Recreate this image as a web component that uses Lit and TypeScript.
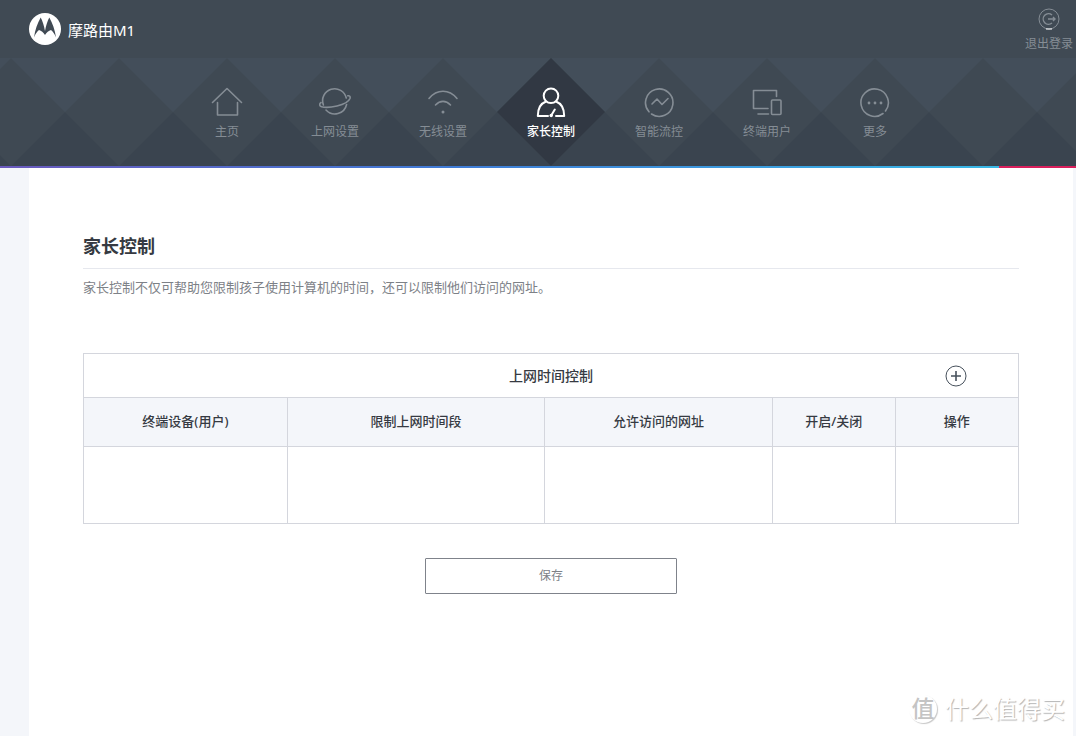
import { LitElement, html, css, svg, type SVGTemplateResult } from "lit";
import { customElement, property } from "lit/decorators.js";

const icons: Record<string, SVGTemplateResult> = {
  home: svg`<path d="M1.500 16.500 16 2.500l14.500 14M6.500 16.500V29h20V16.500" />`,
  planet: svg`<path d="M4.400 19A12 12 0 1 1 27.300 12M27.600 18.500A12 12 0 0 1 7 24" /><path d="M2 16.500C0 18 .3 20 2.500 20.700 6 21.800 12 21.400 18 20 25 18.300 30 15 31 12.500 31.600 10.500 30.500 9.500 28.800 9.800" />`,
  wifi: svg`<path d="M2 12.500C10 2.900 22 2.900 30 12.500M8.500 19c4.500-4.800 10.500-4.800 15 0" /><circle class="dot" cx="16" cy="26" r="1.500" />`,
  parent: svg`<circle cx="16" cy="9.800" r="7.300" /><path d="M11 15.500C5.500 17.500 2.800 23 2.800 30H13M21 15.500C26.500 17.500 29.200 23 29.200 30H21M19.800 23.500 16.500 29" /><circle class="dot" cx="16.200" cy="29.500" r="1.700" />`,
  flow: svg`<path d="M6 25.800A13.700 13.700 0 1 1 8.500 28" /><path d="M9 18 14 13l5 5.500 6-6" />`,
  devices: svg`<path d="M17 22.500H2.500V4.500h23V10.500M7 28h10.500" /><rect x="20.500" y="14" width="9.500" height="14.500" rx="1" />`,
  more: svg`<path d="M26.500 25A13.700 13.700 0 1 0 24 27.500" /><circle class="dot" cx="10" cy="17" r="1.400" /><circle class="dot" cx="16" cy="17" r="1.400" /><circle class="dot" cx="22" cy="17" r="1.400" />`,
};

@customElement("nav-item")
class NavItem extends LitElement {
  static styles = css`
    :host {
      display: block;
      width: 108px;
    }
    .link {
      display: flex;
      flex-direction: column;
      align-items: center;
      gap: 6px;
      height: 108px;
      box-sizing: border-box;
      padding-top: 28px;
      color: #858d95;
      font-size: 12px;
      line-height: 16px;
      text-decoration: none;
    }
    .active {
      color: #fff;
      font-weight: 500;
      background: #313843;
      clip-path: polygon(50% 0, 100% 50%, 50% 100%, 0 50%);
    }
    .icon {
      width: 32px;
      height: 32px;
      fill: none;
      stroke: currentColor;
      stroke-width: 1.6;
      stroke-linejoin: round;
      stroke-linecap: round;
    }
    .active .icon {
      stroke-width: 2;
    }
    .dot {
      fill: currentColor;
      stroke: none;
    }
  `;
  @property() icon = "";
  @property() label = "";
  @property({ type: Boolean }) active = false;

  render() {
    return html`<a class="link ${this.active ? "active" : ""}" href="#${this.icon}">
      <svg class="icon" viewBox="0 0 32 32" aria-hidden="true">${icons[this.icon]}</svg>
      <span>${this.label}</span>
    </a>`;
  }
}

@customElement("app-root")
class AppRoot extends LitElement {
  static styles = css`
    :host {
      display: flex;
      flex-direction: column;
      position: relative;
      min-height: 100vh;
      background: #f4f6fa;
      color: #363a42;
      font-family: "Noto Sans", "Noto Sans CJK SC", sans-serif;
      font-size: 13px;
      line-height: 20px;
    }
    .top {
      display: flex;
      justify-content: space-between;
      align-items: center;
      height: 57px;
      padding: 0 3px 0 29px;
      background: #404a54;
    }
    .brand {
      display: flex;
      align-items: center;
      gap: 7px;
      color: #fff;
      font-size: 15px;
    }
    .brand-name {
      padding-top: 2px;
    }
    .logo {
      width: 32px;
      height: 32px;
    }
    .logout {
      display: flex;
      flex-direction: column;
      align-items: center;
      gap: 6px;
      padding-top: 3px;
      color: #858d95;
      font-size: 12px;
      line-height: 16px;
      text-decoration: none;
    }
    .logout-icon {
      width: 22px;
      height: 22px;
      fill: none;
      stroke: currentColor;
    }
    .nav {
      display: flex;
      justify-content: center;
      height: 109px;
      box-sizing: border-box;
      padding: 1px 3px 0 29px;
      background: #404a54
        url("data:image/svg+xml,%3Csvg xmlns='http://www.w3.org/2000/svg' width='108' height='108'%3E%3Cpath fill='%23434e5a' d='M0 0h108v54H0z'/%3E%3Cpath fill='%233a444f' d='M0 54h108v54H0z'/%3E%3Cpath fill='%233f4953' d='M54 0l54 54-54 54L0 54z'/%3E%3C/svg%3E")
        top center repeat-x content-box border-box;
    }
    .strip {
      display: flex;
      height: 2px;
    }
    .strip-main {
      flex: 1;
      background: linear-gradient(90deg, #6a59bd, #3f7bd6 45%, #38b8e6);
    }
    .strip-end {
      width: 77px;
      background: #d91f5c;
    }
    .page {
      flex: 1;
      margin: 0 3px 0 29px;
      padding: 64px 54px 0;
      background: #fff;
    }
    .title {
      margin: 0;
      padding-bottom: 8px;
      border-bottom: 1px solid #e6e8ee;
      font-size: 18px;
      line-height: 28px;
      font-weight: 700;
    }
    .intro {
      margin: 8px 0 56px;
      color: #7d8187;
    }
    .grid {
      width: 100%;
      border-collapse: collapse;
      table-layout: fixed;
    }
    .grid th,
    .grid td {
      padding: 0;
      border: 1px solid #d4d6dd;
    }
    .grid th {
      font-weight: 500;
    }
    .caption th {
      height: 43px;
      font-size: 14px;
    }
    .caption-row {
      display: grid;
      grid-template-columns: 1fr auto 1fr;
      align-items: center;
      padding: 0 51px;
    }
    .caption-text {
      grid-column: 2;
    }
    .grid .heads th {
      height: 46px;
      padding-bottom: 2px;
      background: #f4f6fa;
    }
    .blank td {
      height: 76px;
    }
    .c1 { width: 21.8%; }
    .c2 { width: 27.5%; }
    .c3 { width: 24.4%; }
    .c4 { width: 13.1%; }
    .add {
      justify-self: end;
      width: 22px;
      height: 22px;
      padding: 0;
      border: 0;
      background: none;
      color: #47515c;
    }
    .add-icon {
      display: block;
      fill: none;
      stroke: currentColor;
    }
    .save {
      display: block;
      width: 252px;
      height: 36px;
      margin: 34px auto;
      padding: 0 0 2px;
      border: 1px solid #7f838b;
      border-radius: 1px;
      background: #fff;
      color: #7d8187;
      font-family: inherit;
      font-size: 12px;
    }
    .mark {
      position: absolute;
      right: 11px;
      bottom: 10px;
      display: flex;
      align-items: center;
      gap: 8px;
      color: #fff;
      font-size: 24px;
      line-height: 34px;
      text-shadow: 1px 1px 1px #b4b4b4;
    }
    .mark-badge {
      width: 28px;
      height: 28px;
      border-radius: 50%;
      box-shadow: 1px 1px 1px #c8c8c8;
      color: #c4c4c4;
      font-size: 23px;
      line-height: 26px;
      font-weight: 500;
      text-align: center;
      text-shadow: none;
    }
  `;

  private items = [
    ["home", "主页"],
    ["planet", "上网设置"],
    ["wifi", "无线设置"],
    ["parent", "家长控制"],
    ["flow", "智能流控"],
    ["devices", "终端用户"],
    ["more", "更多"],
  ];
  private heads = ["终端设备(用户)", "限制上网时间段", "允许访问的网址", "开启/关闭", "操作"];

  render() {
    return html`
      <header class="top">
        <div class="brand">
          <svg class="logo" viewBox="0 0 32 32" aria-hidden="true">
            <circle cx="16" cy="16" r="16" fill="#fff" />
            <path fill="#404a54" d="M11.700 4.500C13.500 8 15 12.500 16 18c1-5.500 2.500-10 4.300-13.500C23.500 10 26 17 27 24.500c-1.300-3.500-3.200-6-5-7.500-2.200.5-4.500 2.500-6 5-1.500-2.500-3.800-4.500-6-5-1.800 1.500-3.700 4-5 7.500 1-7.500 3.500-14.500 6.700-20z" />
          </svg>
          <span class="brand-name">摩路由M1</span>
        </div>
        <a class="logout" href="#logout">
          <svg class="logout-icon" viewBox="0 0 22 22" aria-hidden="true">
            <circle cx="11" cy="11" r="10" />
            <path d="M14 7A5.300 5.300 0 1 0 14 15M10 11h7M15 9l2 2-2 2" stroke-width="1.400" />
            <path d="M8 21h6" stroke="#fff" />
          </svg>
          <span>退出登录</span>
        </a>
      </header>
      <nav class="nav">
        ${this.items.map(
          ([icon, label]) =>
            html`<nav-item .icon=${icon} .label=${label} .active=${icon === "parent"}></nav-item>`
        )}
      </nav>
      <div class="strip"><div class="strip-main"></div><div class="strip-end"></div></div>
      <main class="page">
        <h1 class="title">家长控制</h1>
        <p class="intro">家长控制不仅可帮助您限制孩子使用计算机的时间，还可以限制他们访问的网址。</p>
        <table class="grid">
          <colgroup>
            <col class="c1" /><col class="c2" /><col class="c3" /><col class="c4" /><col />
          </colgroup>
          <thead>
            <tr class="caption">
              <th colspan="5">
                <div class="caption-row">
                  <span class="caption-text">上网时间控制</span>
                  <button class="add" aria-label="添加">
                    <svg class="add-icon" width="22" height="22" viewBox="0 0 22 22">
                      <circle cx="11" cy="11" r="10" />
                      <path d="M11 6v10M6 11h10" stroke-width="1.600" />
                    </svg>
                  </button>
                </div>
              </th>
            </tr>
            <tr class="heads">${this.heads.map((h) => html`<th scope="col">${h}</th>`)}</tr>
          </thead>
          <tbody>
            <tr class="blank">${this.heads.map(() => html`<td></td>`)}</tr>
          </tbody>
        </table>
        <button class="save">保存</button>
      </main>
      <div class="mark">
        <span class="mark-badge">值</span>
        <span>什么值得买</span>
      </div>
    `;
  }
}
